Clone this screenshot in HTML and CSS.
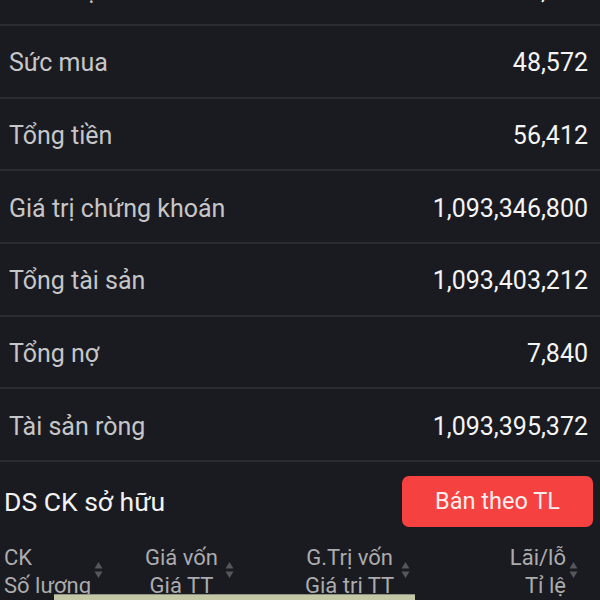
FILE: index.html
```html
<!DOCTYPE html>
<html lang="vi">
    <head>
        <meta charset="UTF-8">
        <title>Tài sản</title>
        <link rel="stylesheet" href="styles.css">
    </head>
    <body>
        <div class="asset">
            <ul class="summary">
                <li><span class="label">Tiền mặt</span><span class="value">56,412</span></li>
                <li><span class="label">Sức mua</span><span class="value">48,572</span></li>
                <li><span class="label">Tổng tiền</span><span class="value">56,412</span></li>
                <li><span class="label">Giá trị chứng khoán</span><span class="value">1,093,346,800</span></li>
                <li><span class="label">Tổng tài sản</span><span class="value">1,093,403,212</span></li>
                <li><span class="label">Tổng nợ</span><span class="value">7,840</span></li>
                <li><span class="label">Tài sản ròng</span><span class="value">1,093,395,372</span></li>
            </ul>
            <div class="holding">
                <h2 class="title">DS CK sở hữu</h2>
                <button class="sell">Bán theo TL</button>
            </div>
            <div class="head">
                <div class="col col-left">
                    <div class="text"><span>CK</span><span>Số lượng</span></div>
                    <svg class="sort" width="9" height="18" viewBox="0 0 9 18"><path d="M4.5 1L8.5 7.5H0.5Z"/><path d="M4.5 17L8.5 10.5H0.5Z"/></svg>
                </div>
                <div class="col col-center">
                    <div class="text"><span>Giá vốn</span><span>Giá TT</span></div>
                    <svg class="sort" width="9" height="18" viewBox="0 0 9 18"><path d="M4.5 1L8.5 7.5H0.5Z"/><path d="M4.5 17L8.5 10.5H0.5Z"/></svg>
                </div>
                <div class="col col-center">
                    <div class="text"><span>G.Trị vốn</span><span>Giá trị TT</span></div>
                    <svg class="sort" width="9" height="18" viewBox="0 0 9 18"><path d="M4.5 1L8.5 7.5H0.5Z"/><path d="M4.5 17L8.5 10.5H0.5Z"/></svg>
                </div>
                <div class="col col-right">
                    <div class="text"><span>Lãi/lỗ</span><span>Tỉ lệ</span></div>
                    <svg class="sort" width="9" height="18" viewBox="0 0 9 18"><path d="M4.5 1L8.5 7.5H0.5Z"/><path d="M4.5 17L8.5 10.5H0.5Z"/></svg>
                </div>
            </div>
        </div>
        <div class="toast"></div>
    </body>
</html>
```

FILE: styles.css
```css
html, body, ul, h2 {
    margin: 0;
    padding: 0;
}

body {
    height: 600px;
    overflow: hidden;
    background-color: #1a1b20;
    font-family: Roboto, "Noto Sans", sans-serif;
}

ul {
    list-style: none;
}

.summary {
    margin-top: -46.67px;
}

.summary li {
    display: flex;
    align-items: center;
    justify-content: space-between;
    box-sizing: border-box;
    height: 72.67px;
    padding: 3px 12px 0 9px;
    border-bottom: 2px solid #2a2c31;
    font-size: 25px;
}

.label {
    color: #c6c6c8;
}

.value {
    color: #f4f4f4;
}

.holding {
    display: flex;
    align-items: center;
    justify-content: space-between;
    margin-top: 14px;
    padding: 0 7px 0 4px;
}

.title {
    color: #f2f2f2;
    font-size: 26.5px;
    font-weight: normal;
}

.sell {
    width: 191px;
    height: 51px;
    border: 0;
    border-radius: 7px;
    background-color: #f5413f;
    color: #fbeeee;
    font-family: inherit;
    font-size: 23.5px;
}

.head {
    display: grid;
    grid-template-columns: 141px 160px 1fr auto;
    margin-top: 17px;
    padding: 0 22px 0 4px;
    color: #acacae;
    font-size: 22px;
    line-height: 28px;
}

.col {
    display: flex;
    align-items: center;
    gap: 3px;
}

.col-center {
    gap: 7px;
}

.text {
    display: flex;
    flex-direction: column;
}

.col-left .text {
    align-items: flex-start;
}

.col-center .text {
    align-items: center;
}

.col-right .text {
    align-items: flex-end;
}

.sort {
    margin-top: -4px;
    fill: #55575c;
}

.toast {
    position: absolute;
    left: 54px;
    top: 594px;
    width: 361px;
    height: 10px;
    border-top: 1px solid #8e9280;
    background-color: #c4c8a7;
}
```
